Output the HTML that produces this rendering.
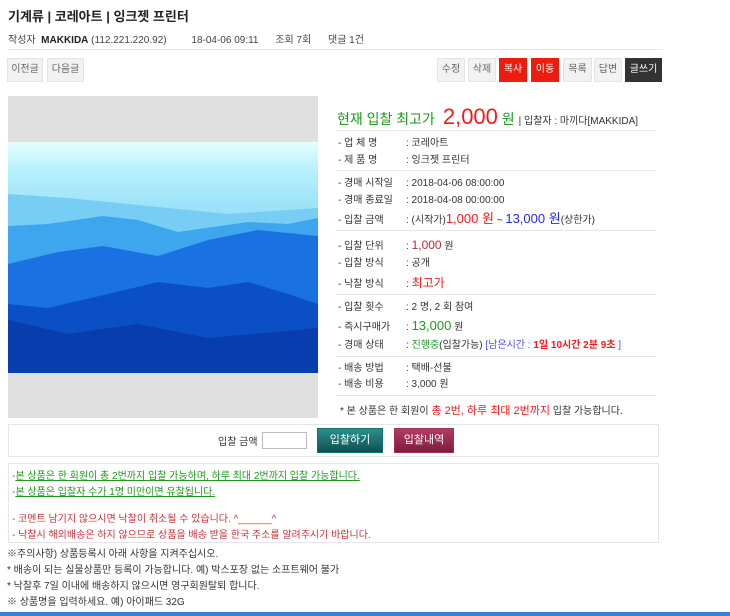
<!DOCTYPE html>
<html><head><meta charset="utf-8"><style>
*{margin:0;padding:0;box-sizing:border-box}
body{width:730px;height:616px;background:#fff;font-family:"Liberation Sans","Noto Sans CJK KR",sans-serif;color:#333;position:relative;overflow:hidden;font-size:11px}
.a{position:absolute;white-space:nowrap}
.btn{position:absolute;top:58px;height:24px;background:#f2f2f2;border:1px solid #e4e4e4;color:#666;font-size:10px;line-height:22px;text-align:center}
.hr{position:absolute;height:1px;background:#e6e6e6}
.row{position:absolute;left:338px;font-size:10px;color:#333;white-space:nowrap;line-height:16px}
.row .l{display:inline-block;width:68px}
.red{color:#f21c1c}.grn{color:#1e9a1e}.blu{color:#2727f0}
</style></head><body>
<div class="a" style="left:8px;top:6px;font-size:13px;font-weight:bold;color:#222">기계류 | 코레아트 | 잉크젯 프린터</div>
<div class="a" style="left:8px;top:31px;font-size:10px;color:#444">작성자 &nbsp;<b style="color:#222">MAKKIDA</b> (112.221.220.92) <span style="margin-left:22px">18-04-06 09:11</span> <span style="margin-left:14px">조회 7회</span> <span style="margin-left:14px">댓글 1건</span></div>
<div class="hr" style="left:8px;top:49px;width:655px"></div>
<div class="btn" style="left:7px;width:36px">이전글</div>
<div class="btn" style="left:47px;width:37px">다음글</div>
<div class="btn" style="left:437px;width:28px">수정</div>
<div class="btn" style="left:468px;width:28px">삭제</div>
<div class="btn" style="left:499px;width:28px;background:#ec1c0e;border-color:#ec1c0e;color:#fff">복사</div>
<div class="btn" style="left:531px;width:28px;background:#ec1c0e;border-color:#ec1c0e;color:#fff">이동</div>
<div class="btn" style="left:563px;width:29px">목록</div>
<div class="btn" style="left:594px;width:28px">답변</div>
<div class="btn" style="left:625px;width:37px;background:#333;border-color:#333;color:#fff">글쓰기</div>

<div class="a" style="left:8px;top:96px;width:310px;height:322px;background:#e0e0e0"></div>
<svg class="a" style="left:8px;top:142px" width="310" height="231" viewBox="0 0 310 231" preserveAspectRatio="none">
<defs><linearGradient id="s" x1="0" y1="0" x2="0" y2="1"><stop offset="0" stop-color="#e6feff"/><stop offset="0.12" stop-color="#b8f0fc"/><stop offset="0.4" stop-color="#8ad8f6"/></linearGradient></defs>
<rect width="310" height="231" fill="url(#s)"/>
<path d="M0 52 L60 56 L140 64 L220 72 L310 66 L310 231 L0 231Z" fill="#78cdf4"/>
<path d="M0 84 L40 82 L95 74 L130 78 L170 90 L240 80 L280 82 L310 76 L310 231 L0 231Z" fill="#3ea6ee"/>
<path d="M0 122 L50 110 L95 104 L150 114 L200 98 L250 88 L310 94 L310 231 L0 231Z" fill="#1a72e2"/>
<path d="M0 162 L40 166 L100 152 L150 140 L200 146 L240 140 L280 152 L310 162 L310 231 L0 231Z" fill="#0a4fc6"/>
<path d="M0 178 L60 192 L130 182 L200 196 L310 186 L310 231 L0 231Z" fill="#0838a6" opacity=".8"/>
</svg>

<div class="a" style="left:337px;top:104px;font-size:14px;color:#1e9a1e">현재 입찰 최고가 <span style="font-size:22px;color:#f21c1c;margin-left:4px">2,000</span> <span style="font-size:14px">원</span> <span style="font-size:10px;color:#333">| 입찰자 : 마끼다[MAKKIDA]</span></div>
<div class="hr" style="left:336px;top:130px;width:320px"></div>
<div class="row" style="top:136px"><span class="l">- 업 체 명</span>: 코레아트</div>
<div class="row" style="top:153px"><span class="l">- 제 품 명</span>: 잉크젯 프린터</div>
<div class="hr" style="left:336px;top:170px;width:320px"></div>
<div class="row" style="top:176px"><span class="l">- 경매 시작일</span>: 2018-04-06 08:00:00</div>
<div class="row" style="top:193px"><span class="l">- 경매 종료일</span>: 2018-04-08 00:00:00</div>
<div class="row" style="top:211px"><span class="l">- 입찰 금액</span>: (시작가)<span class="red" style="font-size:13px">1,000 원</span> <b class="grn">~</b> <span class="blu" style="font-size:13px">13,000 원</span>(상한가)</div>
<div class="hr" style="left:336px;top:230px;width:320px"></div>
<div class="row" style="top:237px"><span class="l">- 입찰 단위</span>: <span style="color:#c0283a;font-size:12px">1,000</span> 원</div>
<div class="row" style="top:256px"><span class="l">- 입찰 방식</span>: 공개</div>
<div class="row" style="top:275px"><span class="l">- 낙찰 방식</span>: <span class="red" style="font-size:12px">최고가</span></div>
<div class="hr" style="left:336px;top:294px;width:320px"></div>
<div class="row" style="top:300px"><span class="l">- 입찰 횟수</span>: 2 명, 2 회 참여</div>
<div class="row" style="top:318px"><span class="l">- 즉시구매가</span>: <span class="grn" style="font-size:13px">13,000</span> 원</div>
<div class="row" style="top:338px"><span class="l">- 경매 상태</span>: <span class="grn">진행중</span>(입찰가능) <span style="color:#4b4bf0">[남은시간 : <b class="red">1일 10시간 2분 9초</b> ]</span></div>
<div class="hr" style="left:336px;top:356px;width:320px"></div>
<div class="row" style="top:361px"><span class="l">- 배송 방법</span>: 택배-선불</div>
<div class="row" style="top:377px"><span class="l">- 배송 비용</span>: 3,000 원</div>
<div class="hr" style="left:336px;top:395px;width:320px"></div>
<div class="a" style="left:340px;top:402px;font-size:10px">* 본 상품은 한 회원이 <span class="red" style="font-size:11px">총 2번, 하루 최대 2번까지</span> 입찰 가능합니다.</div>

<div class="a" style="left:8px;top:424px;width:651px;height:33px;border:1px solid #e6e6e6"></div>
<div class="a" style="left:218px;top:433px;font-size:10px">입찰 금액</div>
<div class="a" style="left:262px;top:432px;width:45px;height:17px;border:1px solid #bbb"></div>
<div class="a" style="left:317px;top:428px;width:66px;height:25px;background:linear-gradient(#2a8d8c,#1c6d6f 55%,#0e4e50);border:1px solid #137070;color:#fff;font-size:11px;text-align:center;line-height:23px">입찰하기</div>
<div class="a" style="left:394px;top:428px;width:60px;height:25px;background:linear-gradient(#b23a62,#982a50 55%,#7a1d3e);border:1px solid #a03058;color:#fff;font-size:11px;text-align:center;line-height:23px">입찰내역</div>

<div class="a" style="left:8px;top:463px;width:651px;height:80px;border:1px solid #e6e6e6"></div>
<div class="a" style="left:12px;top:467px;font-size:10px;color:#1e9a1e">-<u>본 상품은 한 회원이 총 2번까지 입찰 가능하며, 하루 최대 2번까지 입찰 가능합니다.</u></div>
<div class="a" style="left:12px;top:483px;font-size:10px;color:#1e9a1e">-<u>본 상품은 입찰자 수가 1명 미만이면 유찰됩니다.</u></div>
<div class="a" style="left:12px;top:510px;font-size:10px;color:#c8323a">- 코멘트 남기지 않으시면 낙찰이 취소될 수 있습니다. ^______^</div>
<div class="a" style="left:12px;top:526px;font-size:10px;color:#c8323a">- 낙찰시 해외배송은 하지 않으므로 상품을 배송 받을 한국 주소를 알려주시기 바랍니다.</div>
<div class="a" style="left:7px;top:545px;font-size:10px">※주의사항) 상품등록시 아래 사항을 지켜주십시오.</div>
<div class="a" style="left:7px;top:561px;font-size:10px">* 배송이 되는 실물상품만 등록이 가능합니다. 예) 박스포장 없는 소프트웨어 불가</div>
<div class="a" style="left:7px;top:577px;font-size:10px">* 낙찰후 7일 이내에 배송하지 않으시면 영구회원탈퇴 합니다.</div>
<div class="a" style="left:7px;top:593px;font-size:10px">※ 상품명을 입력하세요. 예) 아이패드 32G</div>
<div class="a" style="left:0;top:612px;width:730px;height:4px;background:#3a7fd8"></div>
</body></html>
